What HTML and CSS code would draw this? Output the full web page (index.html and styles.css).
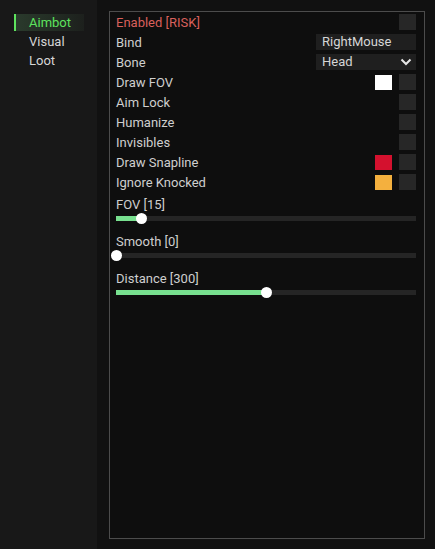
FILE: index.html
```html
<!DOCTYPE html>
<html>
<head>
<meta charset="utf-8">
<link rel="stylesheet" href="styles.css">
</head>
<body>
<div class="app">
  <nav class="sidebar">
    <div class="tab active">Aimbot</div>
    <div class="tab">Visual</div>
    <div class="tab">Loot</div>
  </nav>
  <div class="divider"></div>
  <main class="panel">
    <div class="row"><span class="label risk">Enabled [RISK]</span><span class="check"></span></div>
    <div class="row"><span class="label">Bind</span><span class="field">RightMouse</span></div>
    <div class="row"><span class="label">Bone</span><span class="field combo">Head<svg class="chev" width="12" height="8" viewBox="0 0 12 8"><path d="M1.5 1.5 L6 6 L10.5 1.5" fill="none" stroke="#e6e6e6" stroke-width="2"/></svg></span></div>
    <div class="row"><span class="label">Draw FOV</span><span class="swatch white"></span><span class="check"></span></div>
    <div class="row"><span class="label">Aim Lock</span><span class="check"></span></div>
    <div class="row"><span class="label">Humanize</span><span class="check"></span></div>
    <div class="row"><span class="label">Invisibles</span><span class="check"></span></div>
    <div class="row"><span class="label">Draw Snapline</span><span class="swatch red"></span><span class="check"></span></div>
    <div class="row"><span class="label">Ignore Knocked</span><span class="swatch orange"></span><span class="check"></span></div>
    <div class="slider">
      <div class="slabel">FOV [15]</div>
      <div class="track"><div class="fill" style="width:25px"></div><div class="thumb" style="left:25px"></div></div>
    </div>
    <div class="slider">
      <div class="slabel">Smooth [0]</div>
      <div class="track"><div class="fill" style="width:0px"></div><div class="thumb" style="left:0px"></div></div>
    </div>
    <div class="slider">
      <div class="slabel">Distance [300]</div>
      <div class="track"><div class="fill" style="width:150px"></div><div class="thumb" style="left:150px"></div></div>
    </div>
  </main>
  <div class="edge"></div>
</div>
</body>
</html>
```

FILE: styles.css
```css
* { box-sizing: border-box; }
html, body {
  margin: 0;
  padding: 0;
  background: #0f0f0f;
  font-family: Roboto, "Liberation Sans", sans-serif;
  font-size: 13px;
  color: #cfcfcf;
}
.app {
  display: flex;
  width: 435px;
  height: 549px;
  background: #111111;
}
.sidebar {
  width: 97px;
  background: #181818;
  padding: 14px 13px 0 14px;
  display: flex;
  flex-direction: column;
}
.tab {
  height: 19px;
  line-height: 18px;
  padding-left: 15px;
  color: #d6d6d6;
}
.tab.active {
  height: 17px;
  margin-bottom: 2px;
  line-height: 17px;
  color: #5ee35e;
  border-left: 2px solid #5ee35e;
  padding-left: 13px;
  background: linear-gradient(90deg, #2a3a2c 0%, #222b23 60%, #1d201d 100%);
}
.divider {
  width: 12px;
  background: #111111;
}
.panel {
  width: 316px;
  margin: 11px 0 10px 0;
  border: 1px solid #4c4c4c;
  background: #0e0e0e;
  padding: 0 8px 0 6px;
}
.edge {
  flex: 1;
  background: #111111;
}
.row {
  display: flex;
  align-items: center;
  height: 20px;
  gap: 7px;
}
.label { flex: 1; }
.risk { color: #d9605c; }
.check {
  width: 17px;
  height: 16px;
  background: #272727;
}
.swatch {
  width: 17px;
  height: 15px;
}
.white { background: #ffffff; }
.red { background: #d4112e; }
.orange { background: #f4b03e; }
.field {
  width: 100px;
  height: 16px;
  background: #1f1f1f;
  padding-left: 6px;
  line-height: 16px;
  color: #d6d6d6;
}
.combo {
  display: flex;
  align-items: center;
  justify-content: space-between;
  padding-right: 4px;
}
.slider {
  display: flex;
  flex-direction: column;
  padding-top: 5px;
  height: 37px;
}
.slabel {
  height: 16px;
  line-height: 16px;
}
.track {
  position: relative;
  margin-top: 3px;
  height: 5px;
  background: #252525;
}
.fill {
  height: 100%;
  background: #78e08f;
}
.thumb {
  position: absolute;
  top: -3px;
  width: 11px;
  height: 11px;
  margin-left: -5px;
  border-radius: 50%;
  background: #ffffff;
}
```
